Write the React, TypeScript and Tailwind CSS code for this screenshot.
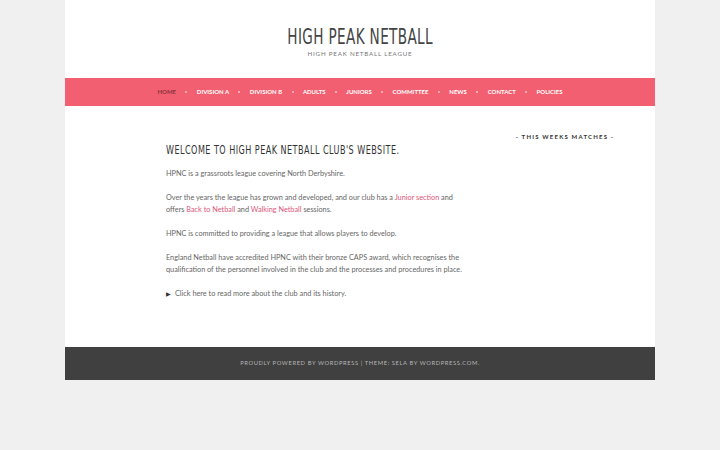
const nav = ['Home', 'Division A', 'Division B', 'Adults', 'Juniors', 'Committee', 'News', 'Contact', 'Policies'];

const display = { fontFamily: '"DejaVu Sans Condensed", "Roboto", sans-serif' };
const body = { fontFamily: 'Lato, "Open Sans", sans-serif' };

export default function App() {
  return (
    <div className="min-h-[450px] bg-[#f0f0f0]" style={body}>
      <div className="w-[590px] mx-auto bg-white">
        <header className="h-[78px] flex flex-col items-center pt-[24px]">
          <h1
            className="text-[21px] leading-[26px] text-[#444] tracking-[0.5px] whitespace-nowrap scale-x-[0.72]"
            style={display}
          >
            HIGH PEAK NETBALL
          </h1>
          <p className="text-[6.2px] leading-[8px] tracking-[0.8px] text-[#777] uppercase">
            High Peak Netball League
          </p>
        </header>

        <nav className="h-[28px] bg-[#f25f70] flex items-center justify-center">
          {nav.map((item, i) => (
            <div key={item} className="flex items-center">
              {i > 0 && <span className="w-[2px] h-[2px] rounded-full bg-white/60 mx-[9.4px]" />}
              <span
                className={`text-[6px] leading-[8px] font-bold uppercase ${
                  i === 0 ? 'text-[#8a3440]' : 'text-white'
                }`}
              >
                {item}
              </span>
            </div>
          ))}
        </nav>

        <div className="flex pl-[101px] pr-[30px] pt-[26px] pb-[47px]">
          <main className="w-[302px] pt-[4px]">
            <h2
              className="text-[11.5px] leading-[16px] tracking-[0.6px] text-[#333] uppercase whitespace-nowrap inline-block origin-left scale-x-[0.78]"
              style={display}
            >
              Welcome to High Peak Netball Club's website.
            </h2>
            <div className="mt-[8px] text-[7.3px] leading-[12px] text-[#666] flex flex-col gap-[12px]">
              <p>HPNC is a grassroots league covering North Derbyshire.</p>
              <p>
                Over the years the league has grown and developed, and our club has a{' '}
                <a className="text-[#e0577a]">Junior section</a> and offers{' '}
                <a className="text-[#e0577a]">Back to Netball</a> and{' '}
                <a className="text-[#e0577a]">Walking Netball</a> sessions.
              </p>
              <p>HPNC is committed to providing a league that allows players to develop.</p>
              <p>
                England Netball have accredited HPNC with their bronze CAPS award, which recognises the
                qualification of the personnel involved in the club and the processes and procedures in place.
              </p>
              <p className="flex items-center">
                <span className="text-[#333] text-[6px] mr-[4px]">▶</span>
                Click here to read more about the club and its history.
              </p>
            </div>
          </main>
          <aside className="ml-auto w-[120px] text-center">
            <h3 className="text-[6px] font-bold tracking-[1.2px] text-[#333] uppercase leading-[10px] whitespace-nowrap">
              - This Weeks Matches -
            </h3>
          </aside>
        </div>

        <footer className="h-[33px] bg-[#404040] flex items-center justify-center">
          <p className="text-[5.8px] tracking-[0.6px] text-[#b5b5b5] uppercase">
            Proudly powered by WordPress | Theme: Sela by WordPress.com.
          </p>
        </footer>
      </div>
    </div>
  );
}
